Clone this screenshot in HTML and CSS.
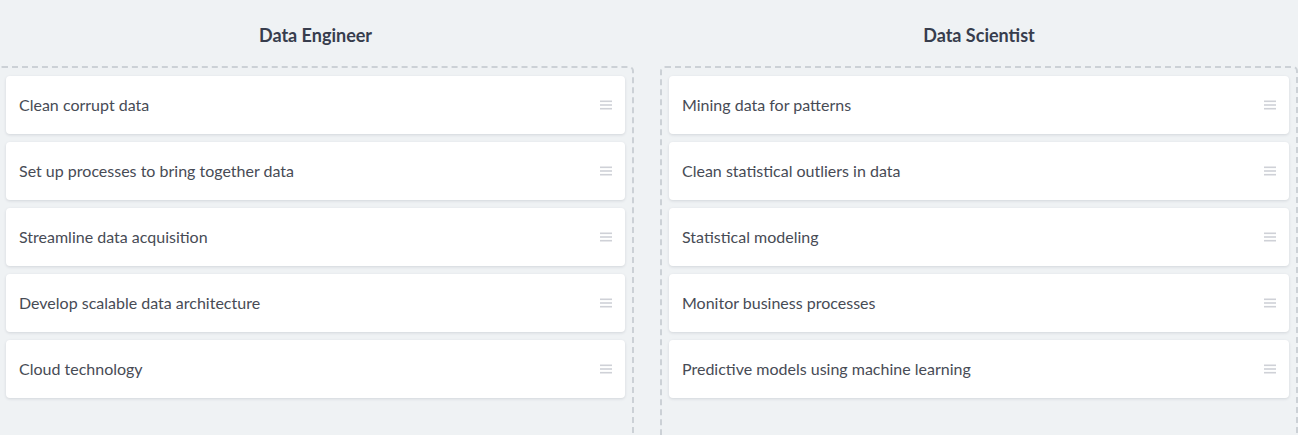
FILE: index.html
```html
<!DOCTYPE html>
<html>
<head>
<meta charset="utf-8">
<link rel="stylesheet" href="styles.css">
</head>
<body>
<div class="board">
  <section class="column">
    <h2 class="column-title">Data Engineer</h2>
    <div class="dropzone">
      <div class="card"><span class="card-text">Clean corrupt data</span><span class="handle"><svg width="12" height="10" viewBox="0 0 12 10"><rect y="0.5" width="12" height="1.6"/><rect y="4.2" width="12" height="1.6"/><rect y="7.9" width="12" height="1.6"/></svg></span></div>
      <div class="card"><span class="card-text">Set up processes to bring together data</span><span class="handle"><svg width="12" height="10" viewBox="0 0 12 10"><rect y="0.5" width="12" height="1.6"/><rect y="4.2" width="12" height="1.6"/><rect y="7.9" width="12" height="1.6"/></svg></span></div>
      <div class="card"><span class="card-text">Streamline data acquisition</span><span class="handle"><svg width="12" height="10" viewBox="0 0 12 10"><rect y="0.5" width="12" height="1.6"/><rect y="4.2" width="12" height="1.6"/><rect y="7.9" width="12" height="1.6"/></svg></span></div>
      <div class="card"><span class="card-text">Develop scalable data architecture</span><span class="handle"><svg width="12" height="10" viewBox="0 0 12 10"><rect y="0.5" width="12" height="1.6"/><rect y="4.2" width="12" height="1.6"/><rect y="7.9" width="12" height="1.6"/></svg></span></div>
      <div class="card"><span class="card-text">Cloud technology</span><span class="handle"><svg width="12" height="10" viewBox="0 0 12 10"><rect y="0.5" width="12" height="1.6"/><rect y="4.2" width="12" height="1.6"/><rect y="7.9" width="12" height="1.6"/></svg></span></div>
    </div>
  </section>
  <section class="column">
    <h2 class="column-title">Data Scientist</h2>
    <div class="dropzone">
      <div class="card"><span class="card-text">Mining data for patterns</span><span class="handle"><svg width="12" height="10" viewBox="0 0 12 10"><rect y="0.5" width="12" height="1.6"/><rect y="4.2" width="12" height="1.6"/><rect y="7.9" width="12" height="1.6"/></svg></span></div>
      <div class="card"><span class="card-text">Clean statistical outliers in data</span><span class="handle"><svg width="12" height="10" viewBox="0 0 12 10"><rect y="0.5" width="12" height="1.6"/><rect y="4.2" width="12" height="1.6"/><rect y="7.9" width="12" height="1.6"/></svg></span></div>
      <div class="card"><span class="card-text">Statistical modeling</span><span class="handle"><svg width="12" height="10" viewBox="0 0 12 10"><rect y="0.5" width="12" height="1.6"/><rect y="4.2" width="12" height="1.6"/><rect y="7.9" width="12" height="1.6"/></svg></span></div>
      <div class="card"><span class="card-text">Monitor business processes</span><span class="handle"><svg width="12" height="10" viewBox="0 0 12 10"><rect y="0.5" width="12" height="1.6"/><rect y="4.2" width="12" height="1.6"/><rect y="7.9" width="12" height="1.6"/></svg></span></div>
      <div class="card"><span class="card-text">Predictive models using machine learning</span><span class="handle"><svg width="12" height="10" viewBox="0 0 12 10"><rect y="0.5" width="12" height="1.6"/><rect y="4.2" width="12" height="1.6"/><rect y="7.9" width="12" height="1.6"/></svg></span></div>
    </div>
  </section>
</div>
</body>
</html>
```

FILE: styles.css
```css
html, body {
  margin: 0;
  padding: 0;
  background: #eff2f4;
  font-family: Lato, "Open Sans", sans-serif;
  overflow: hidden;
}

.board {
  display: flex;
  gap: 26px;
  margin-left: -3px;
  width: 1301px;
}

.column {
  width: 637px;
  flex: none;
  display: flex;
  flex-direction: column;
}

.column + .column {
  width: 638px;
}

.column-title {
  margin: 0;
  height: 66px;
  display: flex;
  align-items: center;
  justify-content: center;
  padding-top: 4px;
  box-sizing: border-box;
  font-size: 18px;
  font-weight: 700;
  color: #373d4d;
}

.dropzone {
  border: 2px dashed #ccd1d6;
  border-radius: 5px;
  padding: 8px 7px 40px 7px;
  display: flex;
  flex-direction: column;
  gap: 8px;
  min-height: 420px;
  box-sizing: border-box;
}

.card {
  height: 58px;
  background: #ffffff;
  border-radius: 4px;
  box-shadow: 0 1px 3px rgba(40, 50, 70, 0.14);
  display: flex;
  align-items: center;
  justify-content: space-between;
  padding: 0 13px 2px 13px;
  box-sizing: border-box;
}

.card-text {
  font-size: 16px;
  color: #474b55;
}

.handle {
  display: flex;
  margin-top: 2px;
  fill: #cfd1d7;
}
```
